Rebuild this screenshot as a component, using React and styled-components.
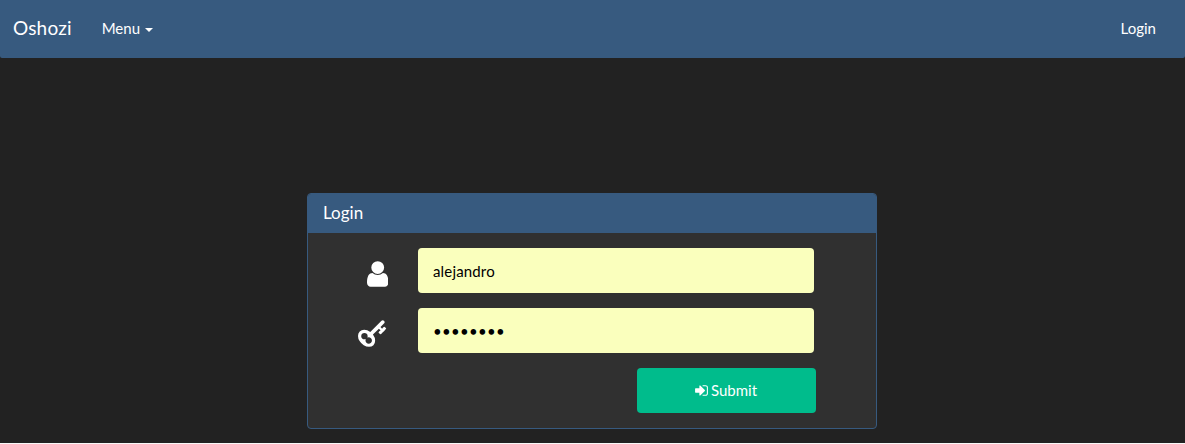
import React from 'react';
import styled, { createGlobalStyle } from 'styled-components';

const Global = createGlobalStyle`
  * { box-sizing: border-box; }
  html { background: #f8f8f8; overflow: hidden; }
  body { margin: 0; font: 15px/21px Lato, "Helvetica Neue", "Liberation Sans", sans-serif; color: #fff; background: #f8f8f8; }
`;

const Page = styled.div`
  height: 443px;
  background: #222;
`;
const Navbar = styled.nav`
  display: flex;
  align-items: center;
  height: 58px;
  padding: 0 14px 2px 13px;
  background: #375a7f;
  border-radius: 0 0 2px 2px;
`;
const Brand = styled.span`
  font-size: 19px;
  line-height: 21px;
  letter-spacing: 0.17px;
  margin: 0 15px 2px 0;
`;
const NavLink = styled.a`
  display: flex;
  align-items: center;
  padding: 0 15px;
  margin-left: ${p => (p.$end ? 'auto' : 0)};
`;
const Caret = styled.span`
  margin: 3px 0 0 5px;
  border: 4px solid transparent;
  border-top-color: #fff;
  border-bottom: 0;
`;
const Main = styled.main`
  padding-top: 135px;
  margin-left: 307px;
`;
const Panel = styled.section`
  width: 570px;
  height: 236px;
  background: #303030;
  border: 1px solid #375a7f;
  border-radius: 4px;
`;
const PanelHeading = styled.h3`
  margin: 0;
  height: 39px;
  padding: 10px 15px;
  font-size: 17px;
  line-height: 18px;
  font-weight: 400;
  background: #375a7f;
  border-radius: 3px 3px 0 0;
`;
const Form = styled.form`
  display: grid;
  grid-template-columns: 80px 396px;
  column-gap: 30px;
  row-gap: 15px;
  padding-top: 15px;
`;
const Icon = styled.label`
  display: flex;
  justify-content: flex-end;
  align-items: center;
  padding-top: 6px;
`;
const Input = styled.input`
  width: 396px;
  height: 45px;
  padding: 10px 15px;
  border: 0;
  border-radius: 4px;
  outline: 0;
  background: #faffbd;
  color: #000;
  font: inherit;
  letter-spacing: ${p => (p.type === 'password' ? '0.3px' : '0.16px')};
`;
const Submit = styled.button`
  grid-column: 2;
  margin-left: 219px;
  width: 179px;
  height: 45px;
  padding: 0 1px 0 0;
  display: flex;
  align-items: center;
  justify-content: center;
  gap: 3px;
  border: 0;
  border-radius: 4px;
  background: #00bc8c;
  color: #fff;
  font: inherit;
`;
const Glyph = styled.svg`
  display: block;
  fill: currentColor;
`;

export default function App() {
  return (
    <Page>
      <Global />
      <Navbar>
        <Brand>Oshozi</Brand>
        <NavLink>Menu<Caret /></NavLink>
        <NavLink $end>Login</NavLink>
      </Navbar>
      <Main>
        <Panel>
          <PanelHeading>Login</PanelHeading>
          <Form>
            <Icon>
              <Glyph width="21.43" height="30" viewBox="0 0 1280 1792">
                <path d="M1280 1399q0 109-62.500 187t-150.500 78h-854q-88 0-150.500-78t-62.500-187q0-85 8.500-160.500t31.500-152 58.500-131 94-89 134.500-34.500q131 128 313 128t313-128q76 0 134.500 34.500t94 89 58.500 131 31.500 152 8.500 160.500zm-256-887q0 159-112.500 271.500t-271.500 112.500-271.500-112.500-112.500-271.500 112.500-271.500 271.500-112.500 271.500 112.500 112.500 271.500z" />
              </Glyph>
            </Icon>
            <Input type="text" defaultValue="alejandro" />
            <Icon>
              <Glyph width="30" height="30" viewBox="0 0 1792 1792">
                <path d="M832 512q0-80-56-136t-136-56-136 56-56 136q0 42 19 83-41-19-83-19-80 0-136 56t-56 136 56 136 136 56 136-56 56-136q0-42-19-83 41 19 83 19 80 0 136-56t56-136zm851 704q0 17-49 66t-66 49q-9 0-28.500-16t-36.500-33-38.500-40-24.500-26l-96 96 220 220q28 28 28 68 0 42-39 81t-81 39q-40 0-68-28l-671-671q-176 131-365 131-163 0-265.500-102.500t-102.500-265.500q0-160 95-313t248-248 313-95q163 0 265.500 102.500t102.500 265.500q0 189-131 365l355 355 96-96q-3-3-26-24.500t-40-38.500-33-36.500-16-28.500q0-17 49-66t66-49q13 0 23 10 6 6 46 44.500t82 79.500 86.500 86 73 78 28.500 41z" transform="matrix(1 0 0 -1 0 1792)" />
              </Glyph>
            </Icon>
            <Input type="password" defaultValue="password" />
            <Submit type="button">
              <Glyph width="13" height="15" viewBox="0 0 1536 1792">
                <path d="M1184 896q0 26-19 45l-544 544q-19 19-45 19t-45-19-19-45v-288h-448q-26 0-45-19t-19-45v-384q0-26 19-45t45-19h448v-288q0-26 19-45t45-19 45 19l544 544q19 19 19 45zm352-352v704q0 119-84.500 203.500t-203.500 84.500h-320q-13 0-22.500-9.500t-9.500-22.500q0-4-1-20t-.5-26.500 3-23.500 10-19.500 20.500-6.500h320q66 0 113-47t47-113v-704q0-66-47-113t-113-47h-312l-11.500-1-11.500-3-8-5.500-7-9-2-13.500q0-4-1-20t-.5-26.500 3-23.500 10-19.500 20.500-6.500h320q119 0 203.500 84.500t84.500 203.500z" />
              </Glyph>
              Submit
            </Submit>
          </Form>
        </Panel>
      </Main>
    </Page>
  );
}
